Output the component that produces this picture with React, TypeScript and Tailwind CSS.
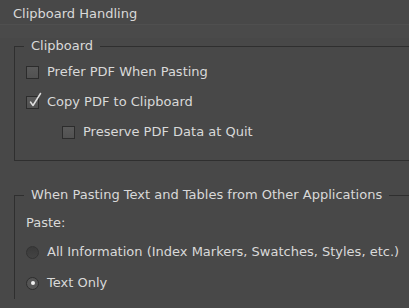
import type { ReactNode } from "react";

const font = { fontFamily: '"DejaVu Sans", Verdana, sans-serif' };

const CheckBox = ({ checked = false }: { checked?: boolean }) => (
  <span className="relative block h-[13px] w-[13px] shrink-0 border border-[#2c2c2c] bg-gradient-to-b from-[#5a5a5a] to-[#515151]">
    {checked && (
      <svg
        viewBox="0 0 14 16"
        className="absolute left-[1px] top-[-5px] h-[16px] w-[14px]"
        fill="none"
        stroke="#dedede"
        strokeWidth="1.5"
        strokeLinecap="round"
        strokeLinejoin="round"
      >
        <path d="M2.5 10 L5 13.5 L12.5 1.5" />
      </svg>
    )}
  </span>
);

const Radio = ({ selected = false }: { selected?: boolean }) => (
  <span
    className={
      selected
        ? "flex h-[13px] w-[13px] shrink-0 items-center justify-center rounded-full border border-[#2e2e2e] bg-[#555555]"
        : "flex h-[13px] w-[13px] shrink-0 items-center justify-center rounded-full border border-[#333333] bg-gradient-to-b from-[#3a3a3a] to-[#434343]"
    }
  >
    {selected && <span className="block h-[4px] w-[4px] rounded-full bg-[#f0f0f0]" />}
  </span>
);

const Row = ({ control, children, indent = false, height = "h-[30px]" }: { control: ReactNode; children: ReactNode; indent?: boolean; height?: string }) => (
  <div className={`flex items-center gap-[8px] ${height} ${indent ? "pl-[36px]" : ""}`}>
    {control}
    <span className="whitespace-nowrap">{children}</span>
  </div>
);

export default function App() {
  return (
    <div
      style={font}
      className="h-[308px] w-[409px] overflow-hidden bg-[#484848] text-[13px] leading-[16px] text-[#d9d9d9]"
    >
      <div className="h-[24px] pl-[13px] pt-[6px] leading-[16px]">Clipboard Handling</div>

      <div className="border-t border-[#4f4f4f] bg-[#4a4a4a] pt-[13px]" />

      <div className="bg-[#484848]">
        <fieldset className="ml-[14px] w-[410px] border border-r-0 border-[#2f2f2f] p-0">
          <legend className="ml-[9px] px-[7px] leading-[16px]">Clipboard</legend>
          <div className="pl-[11px] pt-[3px] pb-[13px]">
            <Row control={<CheckBox />}>Prefer PDF When Pasting</Row>
            <Row control={<CheckBox checked />}>Copy PDF to Clipboard</Row>
            <Row control={<CheckBox />} indent>
              Preserve PDF Data at Quit
            </Row>
          </div>
        </fieldset>

        <fieldset className="ml-[14px] mt-[26px] w-[410px] border border-r-0 border-b-0 border-[#2f2f2f] p-0">
          <legend className="ml-[9px] px-[7px] leading-[16px]">
            When Pasting Text and Tables from Other Applications
          </legend>
          <div className="pl-[11px] pt-[10px]">
            <div className="flex h-[20px] items-center">Paste:</div>
            <Row control={<Radio />} height="mt-[4px] h-[30px]">
              All Information (Index Markers, Swatches, Styles, etc.)
            </Row>
            <Row control={<Radio selected />} height="h-[32px]">
              Text Only
            </Row>
          </div>
        </fieldset>
      </div>
    </div>
  );
}
